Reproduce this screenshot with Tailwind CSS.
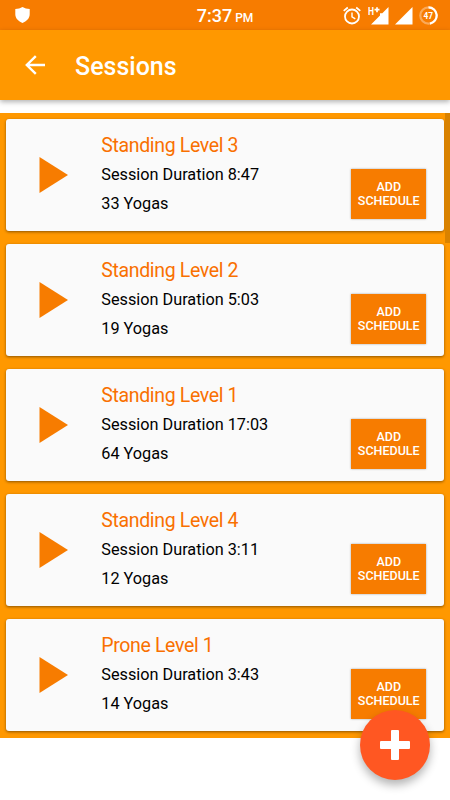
<!DOCTYPE html>
<html lang="en">
  <head>
    <meta charset="UTF-8" />
    <meta name="viewport" content="width=device-width, initial-scale=1.0" />
    <title>Sessions</title>

    <!-- Tailwind CSS -->
    <script src="https://cdn.jsdelivr.net/npm/@tailwindcss/browser@4"></script>
  </head>
  <body class="relative h-[800px] w-[450px] overflow-hidden bg-white font-[Roboto,sans-serif] text-black">
    <!-- Status bar -->
    <div class="flex h-[30px] items-center bg-[#f77c00] text-white">
      <div class="flex w-[150px] pl-[15px]">
        <svg class="h-4 w-[15px]" viewBox="0 0 15 16" fill="currentColor">
          <path d="M7.5 0C5.4 1.3 3 1.9.3 2v5.2c0 4.1 3.2 7.1 7.2 8.8 4-1.7 7.2-4.7 7.2-8.8V2C12 1.9 9.6 1.3 7.5 0z" />
        </svg>
      </div>
      <div class="flex w-[150px] items-baseline justify-center gap-[3px] pt-px font-medium">
        <span class="text-[18px]">7:37</span>
        <span class="text-[12px]">PM</span>
      </div>
      <div class="flex w-[150px] items-center pl-[43px]">
        <svg class="h-[19px] w-[18px]" viewBox="0 0 18 19" fill="none" stroke="currentColor">
          <circle cx="9" cy="10.5" r="7" stroke-width="1.8" />
          <path d="M9 6.5v4.3l3.3 2" stroke-width="1.4" />
          <path d="M.7 4.9l4.1-3.4M17.3 4.9l-4.1-3.4" stroke-width="1.7" />
        </svg>
        <svg class="ml-[7px] h-[19px] w-[21px]" viewBox="0 0 21 19" fill="currentColor">
          <path d="M20.5 1v17.5H3L12 9.5V7.2h2.3z" />
          <path d="M6.5 3.7h5M9 1.2v5" stroke="currentColor" stroke-width="1.7" />
          <text x="0" y="8.5" class="text-[10.5px] font-bold" textLength="6" lengthAdjust="spacingAndGlyphs">H</text>
        </svg>
        <svg class="ml-[6px] h-[19px] w-[18px]" viewBox="0 0 18 19" fill="currentColor">
          <path d="M17.5 1v17.5H0z" />
        </svg>
        <svg class="ml-[6px] h-[19px] w-[19px]" viewBox="0 0 19 19" fill="none" stroke="white">
          <circle cx="9.5" cy="9.5" r="8.2" stroke-width="2.2" stroke-opacity=".35" />
          <path d="M9.5 1.3a8.2 8.2 0 0 1 1.5 16.26" stroke-width="2.2" />
          <text x="9.3" y="12.6" text-anchor="middle" class="text-[9px] font-bold" fill="white" stroke="none" textLength="9.5" lengthAdjust="spacingAndGlyphs">47</text>
        </svg>
      </div>
    </div>

    <!-- Toolbar -->
    <header class="flex h-[70px] items-center bg-[#ff9800] pl-[25px] text-white shadow-[0_2px_5px_rgba(0,0,0,0.3)]">
      <svg class="h-5 w-5" viewBox="0 0 20 20" fill="none" stroke="currentColor" stroke-width="2.4">
        <path d="M20 10H2M10.8 1.1L1.8 10l9 8.9" />
      </svg>
      <h1 class="pt-[3px] pl-[30px] text-[25px] leading-[30px] font-medium">Sessions</h1>
    </header>

    <!-- Session list -->
    <main class="relative mt-[12.5px] h-[625px] bg-[#ff9800]">
      <div id="sessions"></div>
      <div class="absolute top-0 right-0 h-[130px] w-[5px] bg-[#d98200]"></div>
    </main>

    <!-- Floating action button -->
    <button class="absolute top-[710px] left-[360px] flex h-[70px] w-[70px] items-center justify-center rounded-full bg-[#ff5722] text-white shadow-[0_5px_10px_rgba(0,0,0,0.3)]">
      <svg class="h-[30px] w-[30px]" viewBox="0 0 30 30" fill="currentColor">
        <path d="M12 0h6q1 0 1 1v10h10q1 0 1 1v6q0 1-1 1H19v10q0 1-1 1h-6q-1 0-1-1V19H1q-1 0-1-1v-6q0-1 1-1h10V1q0-1 1-1z" />
      </svg>
    </button>

    <script>
      const sessions = [
        { name: "Standing Level 3", duration: "8:47", yogas: 33 },
        { name: "Standing Level 2", duration: "5:03", yogas: 19 },
        { name: "Standing Level 1", duration: "17:03", yogas: 64 },
        { name: "Standing Level 4", duration: "3:11", yogas: 12 },
        { name: "Prone Level 1", duration: "3:43", yogas: 14 },
      ];

      document.getElementById("sessions").innerHTML = sessions
        .map(
          (s) => `
          <div class="h-[125px] p-[6.25px]">
            <div class="flex h-full rounded-[3px] bg-[#fafafa] shadow-[0_1px_3px_rgba(0,0,0,0.45)]">
              <div class="w-[95px] pt-[38px] pl-[33px]">
                <svg class="h-9 w-[29px]" viewBox="0 0 29 36" fill="#f77c00">
                  <path d="M.5 0L29 18 .5 36z" />
                </svg>
              </div>
              <div class="flex-1 pt-[15px]">
                <h2 class="text-[19.5px] leading-6 tracking-[-0.35px] text-[#f97000]">${s.name}</h2>
                <p class="mt-[7px] text-[16.25px] leading-5">Session Duration ${s.duration}</p>
                <p class="mt-[9px] text-[16.25px] leading-5">${s.yogas} Yogas</p>
              </div>
              <button class="mt-[50px] mr-[17.5px] h-[50px] w-[75px] bg-[#f77c00] pt-px text-center text-[12.5px] leading-[14.5px] font-medium text-white shadow-[0_0_2px_rgba(0,0,0,0.35)]">
                ADD<br />SCHEDULE
              </button>
            </div>
          </div>
        `
        )
        .join("");
    </script>
  </body>
</html>
